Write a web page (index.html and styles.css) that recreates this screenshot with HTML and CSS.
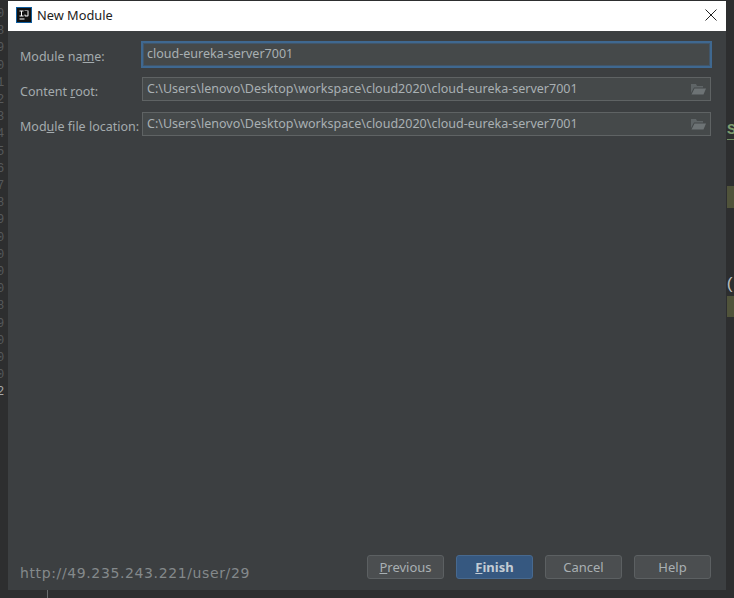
FILE: index.html
```html
<!DOCTYPE html>
<html lang="en">
<head>
<meta charset="utf-8">
<title>New Module</title>
<link rel="stylesheet" href="styles.css">
</head>
<body>
<div class="editor" aria-hidden="true">
  <div class="gutter"><span>0</span><span>8</span><span>9</span><span>0</span><span>1</span><span>2</span><span>3</span><span>4</span><span>5</span><span>6</span><span>7</span><span>8</span><span>9</span><span>0</span><span>0</span><span>0</span><span>0</span><span>8</span><span>9</span><span>0</span><span>0</span><span>0</span><span class="gutter-bright">2</span></div>
  <div class="gutter-line"></div>
  <div class="frag frag-s">S</div>
  <div class="frag frag-olive frag-o1"></div>
  <div class="frag frag-paren">(</div>
  <div class="frag frag-olive frag-o2"></div>
</div>
<main class="dialog">
  <header class="titlebar">
    <svg class="logo" width="16" height="16" viewBox="0 0 16 16">
      <rect width="16" height="16" fill="#0d5c9e"/>
      <rect x="1" y="1" width="14" height="14" fill="#111"/>
      <path d="M3.500 3.500h4v1H6v4h1.500v1h-4v-1H5v-4H3.500zM8.500 3.500h4v5q0 1-1 1h-2q-1 0-1-1v-1h1v1h2v-4.500h-3z" fill="#fff"/>
      <rect x="3.500" y="11.500" width="5" height="1" fill="#fff"/>
    </svg>
    <span class="title">New Module</span>
    <svg class="close" width="12" height="12" viewBox="0 0 12 12"><path d="M.5.500l11 11M11.500.500l-11 11" stroke="#222" stroke-width="1" fill="none"/></svg>
  </header>
  <div class="content">
    <form class="form">
      <label class="label">Module na<u>m</u>e:</label>
      <div class="field field-focus">cloud-eureka-server7001</div>
      <label class="label">Content <u>r</u>oot:</label>
      <div class="field">C:\Users\lenovo\Desktop\workspace\cloud2020\cloud-eureka-server7001
        <svg class="folder" width="16" height="12" viewBox="0 0 16 12"><path d="M1 1h5l1 2h6v1.500H4L1 10z" fill="#5f6567"/><path d="M4.500 5.500H16L13.500 11.500H1.500z" fill="#6d7375"/></svg>
      </div>
      <label class="label">Mod<u>u</u>le file location:</label>
      <div class="field">C:\Users\lenovo\Desktop\workspace\cloud2020\cloud-eureka-server7001
        <svg class="folder" width="16" height="12" viewBox="0 0 16 12"><path d="M1 1h5l1 2h6v1.500H4L1 10z" fill="#5f6567"/><path d="M4.500 5.500H16L13.500 11.500H1.500z" fill="#6d7375"/></svg>
      </div>
    </form>
    <footer class="footer">
      <span class="url">http://49.235.243.221/user/29</span>
      <div class="buttons">
        <button class="btn" type="button"><u>P</u>revious</button>
        <button class="btn btn-primary" type="button"><u>F</u>inish</button>
        <button class="btn" type="button">Cancel</button>
        <button class="btn" type="button">Help</button>
      </div>
    </footer>
  </div>
</main>
</body>
</html>
```

FILE: styles.css
```css
* { box-sizing: border-box; }
html, body { height: 100%; }
body {
  margin: 0;
  padding: 1px 8px 0;
  height: 598px;
  overflow: hidden;
  background: #2d2e2f;
  font-family: "Noto Sans", "Open Sans", sans-serif;
  font-size: 13px;
  color: #a9b0b3;
}
.editor { position: absolute; inset: 0; overflow: hidden; }
.gutter {
  position: absolute; left: -3px; top: 6px; width: 11px;
  display: flex; flex-direction: column;
  font: 12px/17.200px "Liberation Mono", monospace; color: #56595b;
}
.gutter-bright { color: #a6a9aa; }
.gutter-line { position: absolute; left: 47px; top: 590px; width: 1px; height: 8px; background: #6a6d6e; }
.frag { position: absolute; }
.frag-s { left: 727px; top: 122px; color: #7d9c6e; font: 700 15px/17px "Liberation Mono", monospace; border-bottom: 1px solid #6f8f62; width: 7px; overflow: hidden; }
.frag-olive { left: 727px; width: 7px; background: #50533a; }
.frag-o1 { top: 186px; height: 22px; }
.frag-o2 { top: 296px; height: 21px; }
.frag-paren { left: 725px; top: 275px; color: #b8bcbd; font: 17px/19px "Liberation Mono", monospace; }

.dialog {
  position: relative;
  width: 718px; height: 589px;
  display: flex; flex-direction: column;
  background: #3c3f41;
}
.titlebar {
  height: 30px; flex: none;
  display: flex; align-items: center;
  background: #fff; color: #222;
  padding: 0 9px 2px 8px;
}
.logo { flex: none; }
.title { margin-left: 5px; font-size: 12.800px; }
.close { margin-left: auto; }
.content {
  flex: 1; min-height: 0;
  display: flex; flex-direction: column;
  padding: 11px 15px 11px 12px;
}
.form {
  display: grid;
  grid-template-columns: 122px 569px;
  grid-auto-rows: 24px;
  row-gap: 11px;
  align-items: center;
}
.label { font-size: 12.500px; line-height: 18px; padding-top: 5px; white-space: nowrap; color: #a4abae; }
.field {
  position: relative;
  height: 24px;
  display: flex; align-items: center;
  padding: 0 4px 2px;
  background: #45494a;
  border: 1px solid #5f6364;
  color: #a9b0b3;
  font-size: 12.520px;
  white-space: nowrap;
}
.field-focus {
  align-self: start;
  height: 27px;
  margin: -1px -1px 0;
  padding: 0 4px 3px;
  border: 2px solid #3f6890;
  box-shadow: inset 0 0 0 1px #41566a;
}
.folder { position: absolute; right: 4px; top: 5px; }
.footer {
  margin-top: auto;
  display: flex; align-items: flex-end; justify-content: space-between;
}
.url { font: 14px/18px "DejaVu Sans", sans-serif; letter-spacing: .62px; color: #84898b; margin-bottom: -3px; }
.buttons { display: flex; gap: 12px; }
.btn {
  width: 77px; height: 24px; padding: 0 0 1px;
  background: #4b4e50;
  border: 1px solid #5c6062;
  border-radius: 3px;
  color: #a9b0b3;
  font: 13px "Noto Sans", sans-serif;
}
.btn-primary {
  background: #365880;
  border-color: #47698f;
  color: #c3ccd4;
  font-weight: 700;
}
```
